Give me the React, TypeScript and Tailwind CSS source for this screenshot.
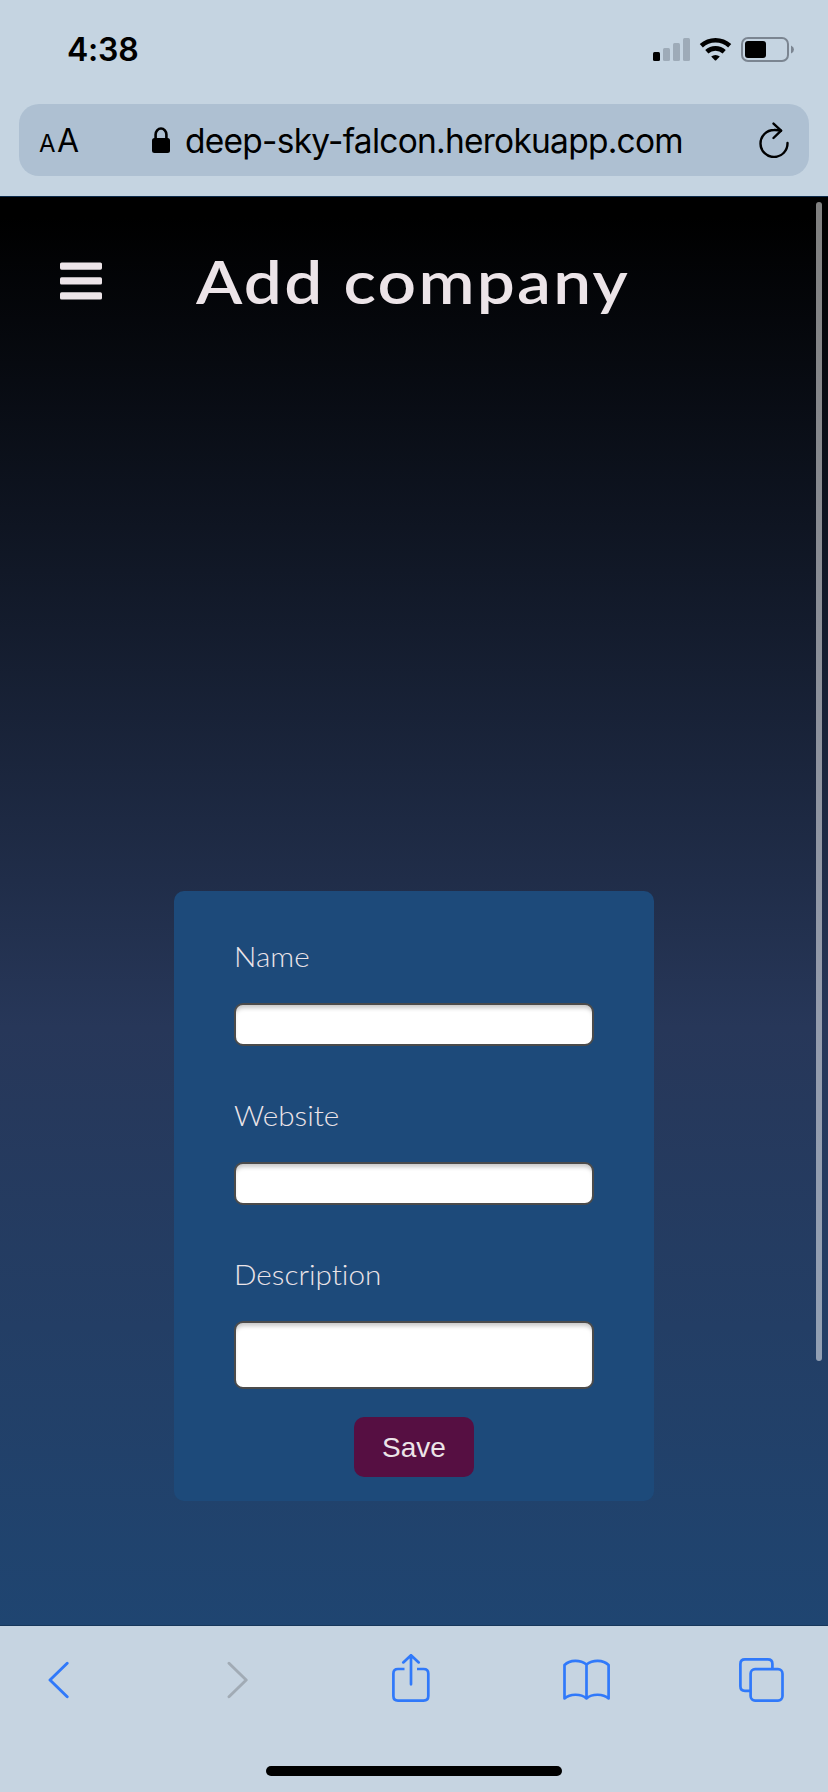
import React from "react";

function StatusBar() {
  return (
    <div className="flex h-[104px] shrink-0 items-start pl-[67px] pr-[34px] pt-[30px]">
      <div className="h-[40px] font-['Inter',sans-serif] text-[32px] font-semibold leading-[40px] tracking-[-0.2px] text-black">4:38</div>
      <svg className="ml-auto mt-[7px]" width="141" height="25" viewBox="653 37 141 25">
        <rect x="653" y="52" width="7" height="9" rx="1.5" fill="#000" />
        <g fill="#9eabb8">
          <rect x="663" y="48" width="7" height="13" rx="1.5" />
          <rect x="673" y="43" width="7" height="18" rx="1.5" />
          <rect x="683" y="38" width="7" height="23" rx="1.5" />
        </g>
        <g fill="none" stroke="#000" strokeWidth="4.6">
          <path d="M701.3 45.8A21 21 0 0 1 729.7 45.8" />
          <path d="M706.8 51.8A12.8 12.8 0 0 1 724.2 51.8" />
        </g>
        <path d="M711.2 56.6A6.3 6.3 0 0 1 719.8 56.6L716.2 60.3Q715.5 60.9 714.8 60.3Z" fill="#000" />
        <rect x="742" y="38" width="46" height="23" rx="6" fill="none" stroke="#7b8591" strokeWidth="2" />
        <rect x="745" y="41" width="21" height="17" rx="3" fill="#000" />
        <path d="M791 45.5Q794 46.8 794 49.5T791 53.5Z" fill="#7b8591" />
      </svg>
    </div>
  );
}

function AddressBar() {
  return (
    <div className="mx-[19px] flex h-[72px] shrink-0 items-center rounded-[20px] bg-[#aec0d2] pl-[20px] pr-[20px] font-['Inter',sans-serif] text-black">
      <div className="flex w-[113px] items-baseline pt-[5px] leading-[40px]">
        <span className="text-[24px] tracking-[-0.5px]">A</span>
        <span className="ml-[2px] text-[32px] tracking-[-0.5px]">A</span>
      </div>
      <svg className="-mt-px shrink-0" width="18" height="26" viewBox="0 0 18 26">
        <rect x="0" y="11" width="18" height="15" rx="2.5" />
        <path d="M3.6 12V7.5a5.4 6 0 0 1 10.8 0V12" fill="none" stroke="#000" strokeWidth="2.6" />
      </svg>
      <div className="ml-[15px] whitespace-nowrap pt-[2px] text-[33.5px] leading-[40px] tracking-[-0.75px]">deep-sky-falcon.herokuapp.com</div>
      <svg className="ml-auto shrink-0" width="30" height="36" viewBox="759.5 122 30 36">
        <g fill="none" stroke="#000" strokeWidth="2.4" strokeLinecap="round" strokeLinejoin="round">
          <path d="M788 143A13.5 13.5 0 1 1 774.5 130Q778.5 129.9 781.5 130.7" />
          <path d="M774 123.6L781.6 130.6L774 138" />
        </g>
      </svg>
    </div>
  );
}

function Field({ label, children }: { label: string; children: React.ReactNode }) {
  return (
    <label className="block">
      <span className="block h-[64px] origin-left scale-x-[1.06] font-['Lato',sans-serif] text-[28px] font-light leading-[34px] text-[#ece4e8] [font-variant-ligatures:none]">{label}</span>
      {children}
    </label>
  );
}

const inputClass =
  "block w-full resize-none rounded-[9px] border-2 border-[#4b4b4b] bg-white shadow-[inset_0_5px_4px_-2px_#c8c8c8] outline-none";

function CompanyForm() {
  return (
    <form className="mx-auto mt-[542px] flex h-[610px] w-[480px] flex-col rounded-[10px] bg-[#1d4a7a] px-[60px] pt-[48px]" onSubmit={(e) => e.preventDefault()}>
      <div className="flex flex-col gap-[52px]">
        <Field label="Name">
          <input className={inputClass + " h-[43px]"} />
        </Field>
        <Field label="Website">
          <input className={inputClass + " h-[43px]"} />
        </Field>
        <Field label="Description">
          <textarea className={inputClass + " h-[68px]"} />
        </Field>
      </div>
      <button className="mx-auto mt-[28px] h-[60px] w-[120px] rounded-[10px] bg-[#560f42] pt-[2px] font-['Liberation_Sans',sans-serif] text-[28px] text-[#ece4e8]">Save</button>
    </form>
  );
}

function Toolbar() {
  return (
    <div className="flex h-[166px] shrink-0 flex-col bg-[#c6d4e1]">
      <div className="flex h-[140px] items-start pl-[48px] pt-[28px] text-[#3079fa]">
        <svg className="mt-[7px]" width="21" height="38" viewBox="47.5 1661 21 38" fill="none" stroke="currentColor" strokeWidth="2.9" strokeLinecap="round" strokeLinejoin="round">
          <path d="M66.7 1663.3L49.5 1680L66.7 1696.7" />
        </svg>
        <svg className="ml-[158px] mt-[7px] text-[#a1abb5]" width="21" height="38" viewBox="226.5 1661 21 38" fill="none" stroke="currentColor" strokeWidth="2.9" strokeLinecap="round" strokeLinejoin="round">
          <path d="M228.5 1663.3L245.7 1680L228.5 1696.7" />
        </svg>
        <svg className="ml-[144px]" width="38" height="49" viewBox="392 1654 38 49" fill="none" stroke="currentColor" strokeWidth="2.7">
          <path d="M404.5 1669H398Q393.4 1669 393.4 1673.6V1696Q393.4 1700.6 398 1700.6H423.5Q428.3 1700.6 428.3 1696V1673.6Q428.3 1669 423.5 1669H417" />
          <path d="M411 1684.3V1655.8M403.3 1662.4L411 1655.2L418.7 1662.4" strokeLinecap="round" strokeLinejoin="round" />
        </svg>
        <svg className="ml-[133px] mt-[5px]" width="47" height="43" viewBox="563 1659 47 43" fill="none" stroke="currentColor" strokeWidth="2.7" strokeLinejoin="round">
          <path d="M586.5 1698.4V1664.5C580 1659.5 570 1659.8 564.5 1665V1698.4C570 1693.8 580.5 1693.3 586.5 1698.4C592.5 1693.3 603 1693.8 608.6 1698.4V1665C603 1659.8 593 1659.5 586.5 1664.5" />
        </svg>
        <svg className="ml-[129px] mt-[4px]" width="46" height="45" viewBox="739 1658 46 45" fill="none" stroke="currentColor" strokeWidth="2.7">
          <rect x="750.6" y="1669.2" width="31.9" height="31.4" rx="4.5" />
          <path d="M772.4 1669V1664Q772.4 1659.4 767.8 1659.4H745Q740.4 1659.4 740.4 1664V1686.3Q740.4 1690.9 745 1690.9H750.5" />
        </svg>
      </div>
      <div className="mx-auto h-[10px] w-[296px] rounded-full bg-black" />
    </div>
  );
}

export default function App() {
  return (
    <div className="flex h-[1792px] w-[828px] flex-col overflow-hidden bg-[#c6d4e1]">
      <div className="flex h-[197px] shrink-0 flex-col border-b border-[#0d2b4c] bg-[#c5d4e1]">
        <StatusBar />
        <AddressBar />
      </div>
      <main className="relative h-[1429px] shrink-0 border-b border-[#17375b] bg-[linear-gradient(180deg,#000_20px,#273759_830px,#1f4571_1429px)]">
        <header className="flex h-[152px] items-start pl-[60px] pt-[48px]">
          <button aria-label="Menu" className="mt-[17px]">
            <svg width="42" height="39" viewBox="0 0 42 39" fill="#ece4e8">
              <rect x="0" y="0.4" width="42" height="7.3" rx="1.6" />
              <rect x="0" y="15.3" width="42" height="7.3" rx="1.6" />
              <rect x="0" y="30.3" width="42" height="7.3" rx="1.6" />
            </svg>
          </button>
          <h1 className="ml-[94px] origin-left scale-x-[1.125] whitespace-nowrap font-['Lato',sans-serif] text-[60px] font-semibold leading-[72px] tracking-[2px] text-[#ece4e8]">Add company</h1>
        </header>
        <CompanyForm />
        <div className="absolute right-[6px] top-[5px] h-[1159px] w-[6px] rounded-full bg-[#ffffff80]" />
      </main>
      <Toolbar />
    </div>
  );
}
